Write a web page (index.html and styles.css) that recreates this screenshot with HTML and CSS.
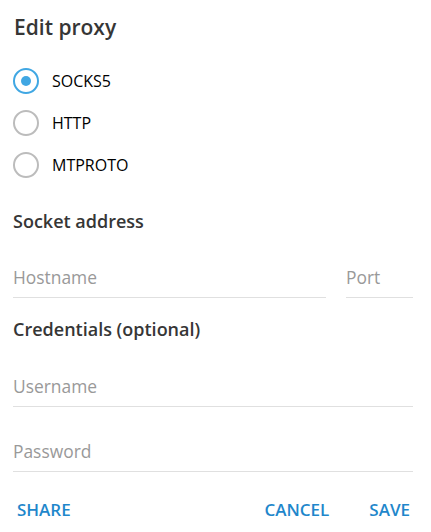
FILE: index.html
```html
<!DOCTYPE html>
<html>
<head>
<meta charset="utf-8">
<link rel="stylesheet" href="styles.css">
</head>
<body>
<div class="dialog">
  <h1 class="title">Edit proxy</h1>
  <div class="radios">
    <label class="radio checked"><span class="circle"></span><span class="rlabel">SOCKS5</span></label>
    <label class="radio"><span class="circle"></span><span class="rlabel">HTTP</span></label>
    <label class="radio"><span class="circle"></span><span class="rlabel">MTPROTO</span></label>
  </div>
  <h2 class="section">Socket address</h2>
  <div class="row">
    <div class="field host">Hostname</div>
    <div class="field port">Port</div>
  </div>
  <h2 class="section cred">Credentials (optional)</h2>
  <div class="field user">Username</div>
  <div class="field pass">Password</div>
  <div class="buttons">
    <span class="btn share">SHARE</span>
    <span class="spacer"></span>
    <span class="btn">CANCEL</span>
    <span class="btn">SAVE</span>
  </div>
</div>
</body>
</html>
```
FILE: styles.css
```css
html, body { margin: 0; padding: 0; background: #fff; }
body { font-family: "Open Sans", sans-serif; width: 431px; height: 532px; overflow: hidden; }
.dialog { padding: 0 18px 0 13px; }
.title { margin: 0; padding-top: 12px; font-size: 21px; font-weight: 600; color: #363636; line-height: 30px; padding-left: 1px; }
.radios { display: flex; flex-direction: column; gap: 16px; margin-top: 26px; }
.radio { display: flex; align-items: center; height: 26px; }
.circle { width: 22px; height: 22px; border: 2px solid #bcbcbc; border-radius: 50%; box-sizing: content-box; position: relative; }
.radio.checked .circle { border-color: #40a7e3; }
.radio.checked .circle::after { content: ""; position: absolute; left: 6px; top: 6px; width: 10px; height: 10px; border-radius: 50%; background: #40a7e3; }
.rlabel { margin-left: 13px; font-size: 16px; color: #000; }
.section { margin: 0; font-size: 18px; font-weight: 600; color: #363636; line-height: 22px; margin-top: 32px; }
.section.cred { margin-top: 20px; }
.row { display: flex; gap: 20px; }
.field { font-size: 17.4px; color: #999; line-height: 22px; padding-top: 34px; padding-bottom: 9px; border-bottom: 1px solid #e0e0e0; }
.host { flex: 1; }
.port { width: 67px; }
.field.user { padding-top: 35px; }
.field.pass { padding-top: 33px; }
.buttons { display: flex; margin-top: 27px; font-size: 17px; font-weight: 600; color: #1f87cb; padding-left: 4px; }
.spacer { flex: 1; }
.btn { line-height: 22px; }
.btn + .btn { margin-left: 40px; }
.share + .spacer + .btn { margin-left: 0; }
.buttons .btn:last-child { margin-right: 3px; }
```
